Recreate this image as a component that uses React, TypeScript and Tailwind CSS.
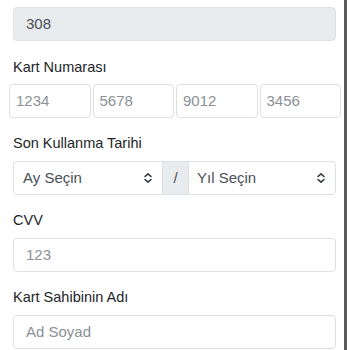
import React from 'react';

const Chevrons = () => (
  <svg width="10" height="12" viewBox="0 0 10 12" fill="none" stroke="#343a40" strokeWidth="1.6" strokeLinecap="round" strokeLinejoin="round">
    <path d="M2 4.5 L5 1.8 L8 4.5" />
    <path d="M2 7.5 L5 10.2 L8 7.5" />
  </svg>
);

const App: React.FC = () => {
  const font = { fontFamily: '"Liberation Sans", Arial, sans-serif' };
  return (
    <div className="flex w-[350px] h-[350px] overflow-hidden bg-white" style={font}>
      <div className="w-[344px] pt-[7px]">
        {/* Amount (read-only) */}
        <div className="ml-[13px] w-[323px] h-[34px] rounded-[4px] border border-[#dfe3e7] bg-[#e9ecef] flex items-center px-[12px] text-[15px] text-[#495057]">
          308
        </div>

        <div className="ml-[13px] mt-[16px] text-[14.5px] text-[#212529] leading-[20px]">Kart Numarası</div>
        <div className="ml-[9px] mt-[7px] flex gap-[2px] w-[332px]">
          {['1234', '5678', '9012', '3456'].map((n) => (
            <div key={n} className="flex-1 h-[34px] rounded-[4px] border border-[#dcdfe3] flex items-center px-[6px] text-[15px] text-[#8a9096]">
              {n}
            </div>
          ))}
        </div>

        <div className="ml-[13px] mt-[15px] text-[14.5px] text-[#212529] leading-[20px]">Son Kullanma Tarihi</div>
        <div className="ml-[13px] mt-[8px] w-[323px] h-[34px] flex rounded-[4px] border border-[#dcdfe3] overflow-hidden">
          <div className="w-[148px] flex items-center justify-between pl-[9px] pr-[9px] text-[15px] text-[#495057]">
            <span>Ay Seçin</span>
            <Chevrons />
          </div>
          <div className="w-[27px] bg-[#e9ecef] border-x border-[#dcdfe3] flex items-center justify-center text-[15px] text-[#495057]">/</div>
          <div className="flex-1 flex items-center justify-between pl-[8px] pr-[9px] text-[15px] text-[#495057]">
            <span>Yıl Seçin</span>
            <Chevrons />
          </div>
        </div>

        <div className="ml-[13px] mt-[15px] text-[14.5px] text-[#212529] leading-[20px]">CVV</div>
        <div className="ml-[13px] mt-[8px] w-[323px] h-[34px] rounded-[4px] border border-[#dcdfe3] flex items-center px-[12px] text-[15px] text-[#8a9096]">
          123
        </div>

        <div className="ml-[13px] mt-[15px] text-[14.5px] text-[#212529] leading-[20px]">Kart Sahibinin Adı</div>
        <div className="ml-[13px] mt-[8px] w-[323px] h-[34px] rounded-[4px] border border-[#dcdfe3] flex items-center px-[12px] text-[15px] text-[#8a9096]">
          Ad Soyad
        </div>
      </div>
      <div className="w-[3px] h-full bg-[#5a5a5a]" />
    </div>
  );
};

export default App;
